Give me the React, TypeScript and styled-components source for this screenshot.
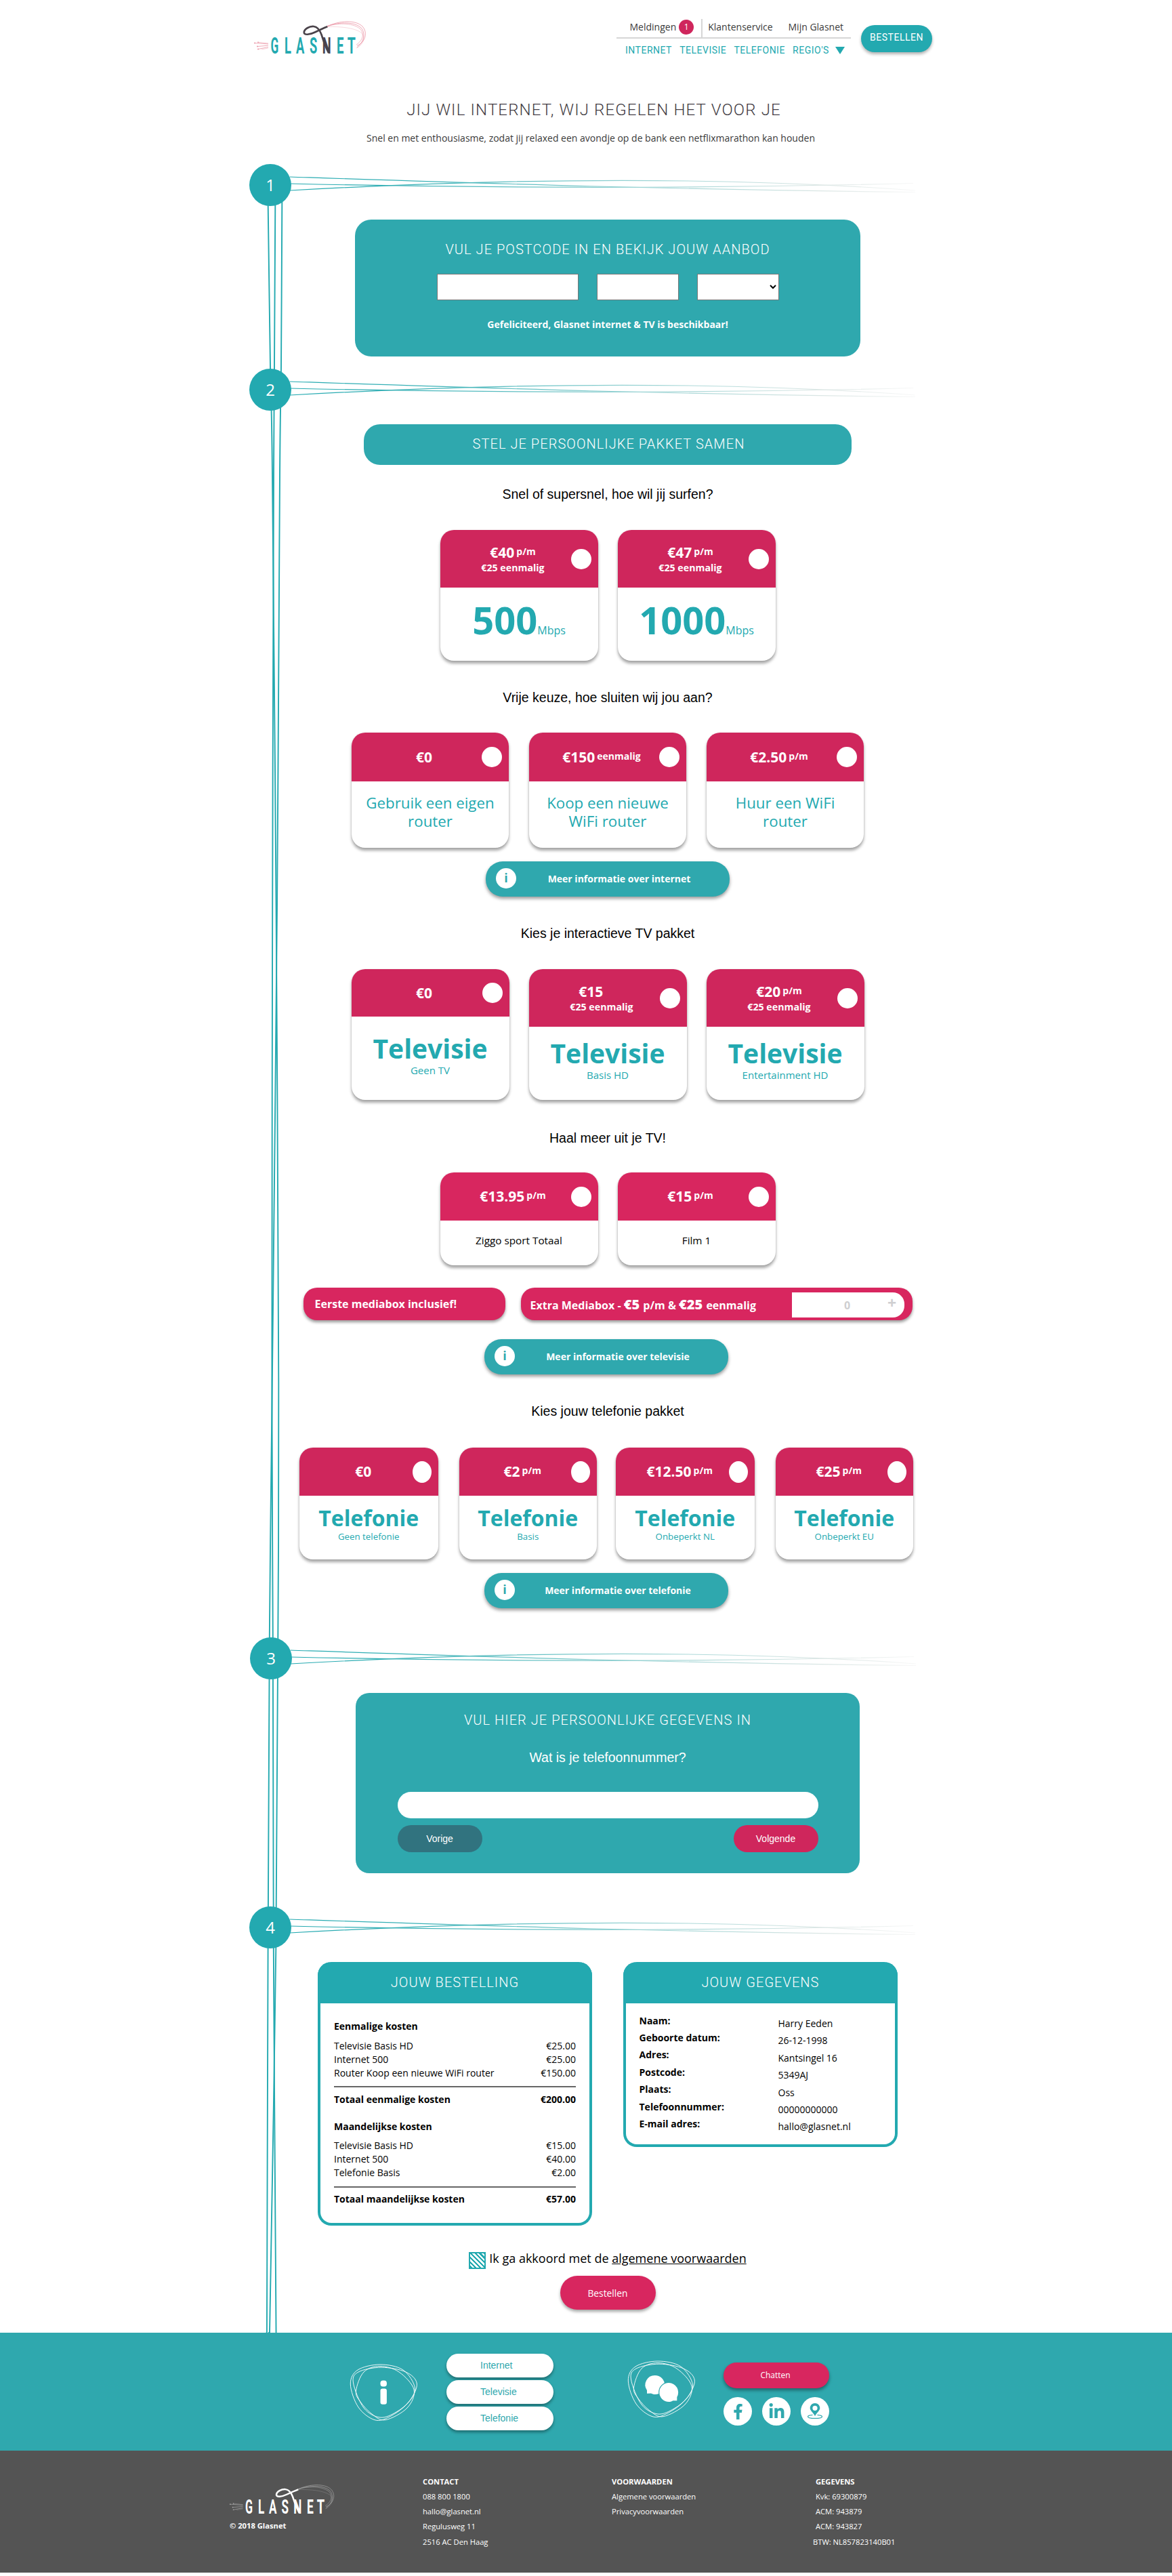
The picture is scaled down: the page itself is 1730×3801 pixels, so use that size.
import React from "react";
import styled, { createGlobalStyle } from "styled-components";
import { FaFacebookF, FaLinkedinIn } from "react-icons/fa";

const teal = "#23a9b0";
const panelTeal = "#2fa8ae";
const pink = "#cf265c";
const brightPink = "#d8265f";
const openSans = `"Open Sans", "Noto Sans", sans-serif`;
const roboto = `Roboto, "Liberation Sans", sans-serif`;
const arial = `"Liberation Sans", Arial, sans-serif`;

const GlobalStyle = createGlobalStyle`
  *, *::before, *::after { box-sizing: border-box; }
  html, body { margin: 0; padding: 0; background: #fff; }
  body { font-family: ${openSans}; font-size: 14px; color: #000; }
  button { border: 0; padding: 0; font: inherit; cursor: pointer; }
  a { color: inherit; text-decoration: none; }
  h1, h2, h3, p, dl, dd, ul { margin: 0; padding: 0; font-size: inherit; font-weight: 400; list-style: none; }
`;

const Page = styled.div`
  width: 1730px;
  min-height: 3801px;
  background: #fff;
`;

/* ---------- header ---------- */

const Header = styled.header`
  display: flex;
  align-items: flex-start;
  height: 90px;
  padding: 28px 354px 0 373px;
`;

const HeaderLogo = styled.div`
  margin: 2px auto 0 0;
  height: 52px;
`;

const Nav = styled.nav`
  width: 346px;
`;

const ServiceRow = styled.div`
  display: flex;
  height: 29px;
  padding-left: 19.5px;
  border-bottom: 2px solid #d6d6d6;
  line-height: 24px;
  color: #3a3a3a;
  white-space: nowrap;
`;

const Badge = styled.span`
  flex: none;
  width: 22px;
  height: 22px;
  margin: 1px 11px 0 4px;
  border-radius: 50%;
  background: ${pink};
  color: #fff;
  font-size: 12px;
  line-height: 22px;
  text-align: center;
`;

const ServiceDivider = styled.span`
  flex: none;
  width: 2px;
  height: 27px;
  margin-right: 8px;
  background: #d6d6d6;
`;

const ServiceLink = styled.a`
  flex: none;
  margin-right: 23px;

  &:last-child {
    margin-right: 0;
  }
`;

const MenuRow = styled.div`
  display: flex;
  align-items: center;
  gap: 11.2px;
  padding: 7px 0 0 13px;
  font-family: ${roboto};
  font-weight: 400;
  letter-spacing: 0.5px;
  line-height: 20px;
  color: ${teal};
  white-space: nowrap;
`;

const Caret = styled.span`
  margin-left: -2px;
  border-left: 7.5px solid transparent;
  border-right: 7.5px solid transparent;
  border-top: 11px solid ${teal};
`;

const OrderLink = styled.a`
  width: 105px;
  height: 40px;
  margin: 9px 0 0 15px;
  border-radius: 20px;
  background: ${teal};
  box-shadow: 0 3px 4px rgba(0, 0, 0, 0.3);
  color: #fff;
  font-family: ${roboto};
  font-weight: 400;
  letter-spacing: 0.5px;
  line-height: 37px;
  text-align: center;
`;

/* ---------- hero ---------- */

const Hero = styled.section`
  height: 152px;
  padding: 57px 0 0 14px;
  text-align: center;
`;

const HeroTitle = styled.h1`
  padding-left: 9px;
  font-family: ${roboto};
  font-size: 24px;
  font-weight: 350;
  letter-spacing: 1.15px;
  line-height: 30px;
  color: #443d44;
`;

const HeroText = styled.p`
  margin-top: 17px;
  line-height: 20px;
  color: #3a3a3a;
`;

/* ---------- timeline ---------- */

const Main = styled.main`
  position: relative;
  display: flex;
  flex-direction: column;
  align-items: center;
  width: 1058px;
  height: 3200px;
  margin-left: 368px;
`;

const ThreadLayer = styled.div`
  position: absolute;
  top: 0;
  left: 0;
  height: 3200px;
`;

const StepRow = styled.div<{ $top?: number; $shift?: number }>`
  position: relative;
  display: flex;
  align-self: flex-start;
  height: 62px;
  margin-top: ${(p) => p.$top ?? 0}px;
  margin-left: ${(p) => p.$shift ?? 0}px;
`;

const StepCircle = styled.span`
  width: 62px;
  height: 62px;
  margin-right: -2px;
  border-radius: 50%;
  background: ${teal};
  color: #fff;
  font-size: 24px;
  font-weight: 400;
  line-height: 61px;
  text-align: center;
`;

const Panel = styled.section<{ $width: number; $height: number; $pad: number; $radius: number }>`
  display: flex;
  flex-direction: column;
  align-items: center;
  width: ${(p) => p.$width}px;
  height: ${(p) => p.$height}px;
  margin-top: 20px;
  padding-top: ${(p) => p.$pad}px;
  border-radius: ${(p) => p.$radius}px;
  background: ${panelTeal};
  color: #fff;
`;

const PanelTitle = styled.h2`
  font-family: ${roboto};
  font-size: 20px;
  font-weight: 350;
  letter-spacing: 1.05px;
  line-height: 28px;
`;

const FieldRow = styled.div`
  display: flex;
  gap: 27px;
  margin-top: 22px;
`;

const Field = styled.input<{ $width: number }>`
  width: ${(p) => p.$width}px;
  height: 39px;
  border: 1px solid #767676;
  border-radius: 0;
  background: #fff;
`;

const FieldSelect = styled.select`
  width: 121px;
  height: 39px;
  border: 1px solid #767676;
  border-radius: 0;
  background: #fff;
`;

const Availability = styled.p`
  margin-top: 25.5px;
  font-weight: 700;
  line-height: 20px;
`;

const SectionPill = styled.h2`
  width: 720px;
  height: 60px;
  margin-top: 20px;
  padding-left: 3px;
  border-radius: 24px;
  background: ${panelTeal};
  color: #fff;
  font-family: ${roboto};
  font-size: 20px;
  font-weight: 350;
  letter-spacing: 1.05px;
  line-height: 58px;
  text-align: center;
`;

const Question = styled.h3<{ $top: number; $bottom: number }>`
  margin: ${(p) => p.$top}px 0 ${(p) => p.$bottom}px;
  font-family: ${arial};
  font-size: 19.5px;
  line-height: 24px;
`;

/* ---------- option cards ---------- */

const CardRow = styled.div<{ $gap: number }>`
  display: flex;
  gap: ${(p) => p.$gap}px;
`;

const PhoneRow = styled(CardRow)`
  margin-right: 4.5px;
`;

const Card = styled.article<{ $width: number; $height: number }>`
  width: ${(p) => p.$width}px;
  height: ${(p) => p.$height}px;
  border-radius: 20px;
  background: #fff;
  box-shadow: 0 4px 4px rgba(0, 0, 0, 0.35), 0 0 2px rgba(0, 0, 0, 0.12);
`;

const CardHead = styled.header<{ $height: number; $color: string }>`
  display: flex;
  align-items: center;
  height: ${(p) => p.$height}px;
  padding: 0 10px 0 22px;
  border-radius: 20px 20px 0 0;
  background: ${(p) => p.$color};
  color: #fff;
`;

const PriceBlock = styled.div`
  flex: 1;
  font-weight: 700;
  text-align: center;
  white-space: nowrap;
`;

const Price = styled.div`
  font-size: 21px;
  line-height: 27px;
`;

const Period = styled.small<{ $hidden?: boolean }>`
  margin-left: 3px;
  font-size: 14px;
  line-height: 0;
  vertical-align: 4px;
  visibility: ${(p) => (p.$hidden ? "hidden" : "visible")};
`;

const OneOff = styled.div`
  font-size: 14.2px;
  line-height: 18px;
`;

const Radio = styled.span<{ $w: number; $h: number }>`
  flex: none;
  width: ${(p) => p.$w}px;
  height: ${(p) => p.$h}px;
  border-radius: 50%;
  background: #fff;
`;

const SpeedBody = styled.div`
  display: flex;
  justify-content: center;
  align-items: baseline;
  padding-top: 9px;
  font-size: 16px;
  color: ${teal};
`;

const Speed = styled.strong`
  font-size: 56px;
  line-height: 76px;
`;

const RouterBody = styled.div`
  padding: 18px 20px 0;
  font-size: 22.3px;
  line-height: 27px;
  text-align: center;
  color: ${teal};
`;

const ExtraBody = styled.div`
  padding-top: 19px;
  font-size: 15.3px;
  line-height: 20px;
  text-align: center;
`;

const PackageBody = styled.div<{ $pad: number; $size: number; $line: number; $sub: number }>`
  padding-top: ${(p) => p.$pad}px;
  text-align: center;
  color: ${teal};
  font-size: ${(p) => p.$sub}px;
  line-height: 18px;

  strong {
    display: block;
    font-size: ${(p) => p.$size}px;
    line-height: ${(p) => p.$line}px;
  }
`;

const InfoButton = styled.button<{ $top: number; $shift?: number }>`
  display: flex;
  align-items: center;
  width: 360px;
  height: 52px;
  margin: ${(p) => p.$top}px ${(p) => p.$shift ?? 0}px 0 0;
  padding: 0 15px 2px;
  border-radius: 25px;
  background: ${panelTeal};
  box-shadow: 0 3px 5px rgba(0, 0, 0, 0.4);
  color: #fff;
  font-weight: 700;
`;

const InfoMark = styled.span`
  width: 30px;
  height: 30px;
  border-radius: 50%;
  background: #fff;
  color: ${panelTeal};
  font-size: 18px;
  line-height: 29px;
`;

const InfoLabel = styled.span`
  flex: 1;
  padding-left: 4px;
`;

/* ---------- media boxes ---------- */

const MediaRow = styled.div`
  display: flex;
  gap: 23px;
  margin-top: 33px;
`;

const MediaBar = styled.div<{ $width: number }>`
  display: flex;
  width: ${(p) => p.$width}px;
  height: 48px;
  border-radius: 20px;
  background: ${brightPink};
  box-shadow: 0 3px 4px rgba(0, 0, 0, 0.4);
  color: #fff;
  font-size: 16px;
  font-weight: 700;
  line-height: 48px;
  white-space: nowrap;
`;

const MediaText = styled.span<{ $left: number; $drop?: number }>`
  flex: 1;
  padding: ${(p) => p.$drop ?? 0}px 0 0 ${(p) => p.$left}px;

  b {
    margin-right: 1px;
    font-size: 20px;
    line-height: 1;
  }
`;

const Stepper = styled.div`
  display: grid;
  grid-template-columns: 34px 1fr 36px;
  width: 166px;
  height: 37px;
  margin: 7px 12px 0 0;
  border-radius: 0 17px 17px 0;
  background: #fff;
  color: #cfcfd1;
  line-height: 38px;
  text-align: center;
`;

const Amount = styled.span`
  grid-column: 2;
`;

const Plus = styled.span`
  font-size: 23px;
  line-height: 31px;
`;

/* ---------- personal details form ---------- */

const FormQuestion = styled.p`
  margin-top: 28.5px;
  font-family: ${arial};
  font-size: 19.5px;
  line-height: 24px;
`;

const RoundInput = styled.input`
  width: 621px;
  height: 39px;
  margin-top: 39px;
  border: 0;
  border-radius: 19.5px;
  background: #fff;
`;

const FormActions = styled.div`
  display: flex;
  justify-content: space-between;
  width: 621px;
  margin-top: 10px;
`;

const FormButton = styled.button<{ $color: string }>`
  width: 125px;
  height: 40px;
  border-radius: 20px;
  background: ${(p) => p.$color};
  color: #fff;
  font-family: ${arial};
  font-size: 14px;
`;

/* ---------- summary ---------- */

const SummaryRow = styled.div`
  display: flex;
  align-items: flex-start;
  gap: 46px;
  margin-top: 20px;
`;

const SummaryCard = styled.section<{ $height: number }>`
  width: 405px;
  height: ${(p) => p.$height}px;
  border: 4px solid ${teal};
  border-top: 0;
  border-radius: 20px;
  background: #fff;
`;

const SummaryTitle = styled.h2`
  height: 61px;
  margin: 0 -4px;
  border-radius: 20px 20px 0 0;
  background: ${teal};
  color: #fff;
  font-family: ${roboto};
  font-size: 20px;
  font-weight: 350;
  letter-spacing: 1.05px;
  line-height: 61px;
  text-align: center;
`;

const CostGroup = styled.div`
  padding: 0 20px;
  margin-top: 20px;
  line-height: 20px;

  &:first-of-type {
    margin-top: 24px;
  }
`;

const CostHeading = styled.h3`
  margin-bottom: 8.5px;
  font-weight: 700;
`;

const CostLine = styled.div<{ $total?: boolean }>`
  display: flex;
  justify-content: space-between;
  font-weight: ${(p) => (p.$total ? 700 : 400)};
`;

const CostRule = styled.div`
  height: 2px;
  margin: 9.5px 0 7.5px;
  background: #666;
`;

const Details = styled.dl`
  display: grid;
  grid-template-columns: 205px 1fr;
  padding: 12.5px 0 0 19.5px;
  line-height: 25.4px;
`;

const DetailLabel = styled.dt`
  font-weight: 700;
`;

const DetailValue = styled.dd`
  padding-top: 4.5px;
  margin-bottom: -4.5px;
`;

const Consent = styled.label`
  display: flex;
  gap: 5px;
  height: 25px;
  margin-top: 39px;
  font-size: 18px;
  line-height: 18px;

  a {
    text-decoration: underline;
  }
`;

const StripedBox = styled.span`
  width: 25px;
  height: 25px;
  border: 2px solid ${teal};
  background: repeating-linear-gradient(45deg, ${teal} 0 2.2px, #fff 2.2px 4.8px);
`;

const SubmitButton = styled.button`
  width: 141px;
  height: 50px;
  margin-top: 10px;
  border-radius: 25px;
  background: ${brightPink};
  box-shadow: 0 3px 4px rgba(0, 0, 0, 0.35);
  color: #fff;
  font-size: 13.8px;
`;

/* ---------- contact strip & footer ---------- */

const ContactStrip = styled.section`
  display: flex;
  align-items: flex-start;
  height: 174px;
  padding-left: 515px;
  background: ${panelTeal};
`;

const BlobBox = styled.div<{ $top: number; $left?: number }>`
  width: 102px;
  height: 87px;
  margin: ${(p) => p.$top}px 0 0 ${(p) => p.$left ?? 0}px;
`;

const LinkStack = styled.div`
  display: flex;
  flex-direction: column;
  gap: 4px;
  margin: 31px 0 0 42px;
`;

const StackLink = styled.a`
  width: 158px;
  height: 35px;
  padding-left: 50px;
  border-radius: 17.5px;
  background: #fff;
  box-shadow: 0 3px 4px rgba(0, 0, 0, 0.35);
  color: ${panelTeal};
  font-family: ${arial};
  line-height: 35px;
`;

const ChatColumn = styled.div`
  width: 156px;
  margin: 44px 0 0 41px;
`;

const ChatButton = styled.button`
  display: block;
  width: 156px;
  height: 38px;
  padding-right: 3px;
  border-radius: 19px;
  background: ${brightPink};
  box-shadow: 0 3px 5px rgba(0, 0, 0, 0.4);
  color: #fff;
  font-size: 12px;
  line-height: 38px;
`;

const SocialRow = styled.div`
  display: flex;
  justify-content: space-between;
  margin-top: 13px;
`;

const Social = styled.a`
  display: flex;
  align-items: center;
  justify-content: center;
  width: 42px;
  height: 42px;
  border-radius: 50%;
  background: #fff;
  color: ${panelTeal};
`;

const Footer = styled.footer`
  display: grid;
  grid-template-columns: 287px 279px 301px auto;
  height: 180px;
  padding: 34.5px 0 0 337px;
  background: #545454;
  color: #fff;
  font-size: 11.2px;
  line-height: 22.3px;
`;

const FooterBrand = styled.div`
  padding-top: 14.5px;
`;

const Copyright = styled.p`
  margin: 4.5px 0 0 2px;
  font-weight: 700;
`;

const FooterHeading = styled.h3`
  font-size: 11.2px;
  font-weight: 700;
`;

const FooterItem = styled.li<{ $outdent?: boolean }>`
  margin-left: ${(p) => (p.$outdent ? -4 : 0)}px;
`;

/* ---------- drawings ---------- */

type Pt = [number, number];

// Smooth curve through the points (Catmull-Rom converted to cubic Béziers).
function smooth(pts: Pt[], closed = false): string {
  const n = pts.length;
  const at = (i: number): Pt => (closed ? pts[(i + n) % n] : pts[Math.max(0, Math.min(n - 1, i))]);
  let d = `M${pts[0][0]} ${pts[0][1]}`;
  const end = closed ? n : n - 1;
  for (let i = 0; i < end; i++) {
    const [a, b, c, e] = [at(i - 1), at(i), at(i + 1), at(i + 2)];
    d += `C${b[0] + (c[0] - a[0]) / 6} ${b[1] + (c[1] - a[1]) / 6} ${c[0] - (e[0] - b[0]) / 6} ${c[1] - (e[1] - b[1]) / 6} ${c[0]} ${c[1]}`;
  }
  return closed ? d + "Z" : d;
}

const threads: Pt[][] = [
  [[395.3, 280], [395.7, 304], [399, 540], [402, 700], [407.6, 1340], [411.3, 2040], [410.3, 2416], [407.3, 2875], [398.4, 3420], [396.8, 3442]],
  [[416.8, 280], [416.3, 304], [415, 540], [413, 700], [409, 1340], [401.8, 2040], [397.8, 2416], [395.6, 2875], [394, 3420], [393.5, 3442]],
  [[406.6, 280], [406.3, 304], [405, 540], [404, 700], [402.2, 1340], [401.4, 2040], [402.8, 2416], [403.8, 2875], [407.4, 3420], [407.6, 3442]],
];

function Threads() {
  return (
    <svg width="62" height="3200" viewBox="368 242 62 3200" fill="none" stroke={teal} strokeWidth="1.9">
      {threads.map((t, i) => (
        <path key={i} d={smooth(t)} />
      ))}
    </svg>
  );
}

function StepThreads({ id }: { id: string }) {
  return (
    <svg width="930" height="62" viewBox="0 0 930 62" fill="none" stroke={`url(#${id})`} strokeWidth="1.2">
      <defs>
        <linearGradient id={id} gradientUnits="userSpaceOnUse" x1="0" y1="0" x2="924" y2="0">
          <stop offset="0" stopColor={teal} />
          <stop offset="0.25" stopColor="#3fb3b8" />
          <stop offset="0.6" stopColor="#a3d6d6" />
          <stop offset="0.85" stopColor="#dbe6e4" />
          <stop offset="1" stopColor="#f8f8f8" />
        </linearGradient>
      </defs>
      <path d="M0 19C270 28 560 38 923 41.5" />
      <path d="M0 29C300 36 620 36 920 28.5" />
      <path d="M0 39C300 22 620 17 923 39" />
    </svg>
  );
}

const letters: [string, number, number][] = [
  ["G", 32.5, 0.53],
  ["L", 52, 0.56],
  ["A", 70.2, 0.56],
  ["S", 89.5, 0.56],
  ["N", 109.2, 0.56],
  ["E", 129.2, 0.57],
  ["T", 145.8, 0.6],
];

function Logo({ word, dark, wire, width, height }: { word: string; dark: string; wire: string; width: number; height: number }) {
  return (
    <svg width={width} height={height} viewBox="0 0 172 52" preserveAspectRatio="none" display="block" overflow="visible">
      <g fill="none" stroke={wire} strokeWidth="0.75">
        <path d="M110 9C128 0 152 -1 162 9C171 19 165 33 154 37.5" />
        <path d="M110 8.5C130 2 150 2 160 11C168 20 163 33 154 40" />
        <path d="M110 9C124 4 146 3 158 12C166 20 162 30 153 36" opacity="0.8" />
        <path d="M110 9.5C130 9 150 11 160 18C168 26 162 37 153 41" opacity="0.45" />
        <path d="M3 33.5L23 35" />
        <path d="M8 32.3L23 34" opacity="0.7" />
        <path d="M7 38.5L23 37.2" />
        <path d="M8 42.5L23 39.5" />
        <path d="M13 43L23 41" opacity="0.5" />
      </g>
      <g fill={wire}>
        <circle cx="3" cy="33.5" r="0.9" />
        <circle cx="8" cy="32.3" r="0.9" />
        <circle cx="7" cy="38.5" r="0.9" />
        <circle cx="8" cy="42.5" r="0.9" />
      </g>
      {letters.map(([char, x, scale]) => (
        <text
          key={char}
          transform={`translate(${x} 48.6) scale(${scale} 1)`}
          textAnchor="middle"
          fontFamily="Roboto, 'Liberation Sans', sans-serif"
          fontSize="32.6"
          fontWeight="700"
          fill={char === "N" ? dark : word}
        >
          {char}
        </text>
      ))}
      <path
        d="M110.3 9.2C103 12 98 14.5 92 17.5C84 21.5 76 22 75.8 18C76 12.5 84 8.6 90 9C96.5 9.5 99.5 15.5 101.5 21C104 29 108 40 112 48"
        fill="none"
        stroke={dark}
        strokeWidth="2.7"
      />
    </svg>
  );
}

const blobCurves: Pt[][] = [
  [[2.3, 32], [13, 11], [46, 3], [80, 11], [97.5, 38], [86, 61], [60, 80], [38, 84.7], [14, 66]],
  [[6.5, 30], [14, 14], [48, 7.2], [84, 14], [100.3, 31], [90, 56], [70, 73], [46, 81], [22, 67]],
  [[10.5, 42], [22, 14], [46, 5.5], [74, 14], [96, 40], [86, 67], [54, 84.7], [34, 76], [17, 58]],
];

function Blob({ children }: { children: React.ReactNode }) {
  return (
    <svg width="102" height="87" viewBox="0 0 102 87">
      <g fill="none" stroke="#fff" strokeWidth="0.9">
        {blobCurves.map((c, i) => (
          <path key={i} d={smooth(c, true)} />
        ))}
      </g>
      {children}
    </svg>
  );
}

function PinIcon() {
  return (
    <svg width="26" height="26" viewBox="0 0 26 26">
      <path
        fill="currentColor"
        fillRule="evenodd"
        d="M13 1C8.9 1 5.7 4.2 5.7 8.2C5.7 12 10.2 14.5 13 20C15.8 14.5 20.3 12 20.3 8.2C20.3 4.2 17.1 1 13 1ZM13 4.7A3.6 3.6 0 1 1 13 11.9A3.6 3.6 0 1 1 13 4.7Z"
      />
      <path d="M9.5 18.3C5 18.6 2.5 19.5 2.5 20.7C2.5 22.3 7 23.4 13 23.4S23.5 22.3 23.5 20.7C23.5 19.5 21 18.6 16.5 18.3" fill="none" stroke="currentColor" strokeWidth="1.3" />
    </svg>
  );
}

/* ---------- card pieces ---------- */

type HeadProps = {
  price: string;
  period?: string;
  hidePeriod?: boolean;
  oneOff?: string;
  height?: number;
  color?: string;
  oval?: boolean;
};

function PriceHead({ price, period, hidePeriod, oneOff, height = 71, color = pink, oval }: HeadProps) {
  return (
    <CardHead $height={height} $color={color}>
      <PriceBlock>
        <Price>
          {price}
          {period && <Period $hidden={hidePeriod}>{period}</Period>}
        </Price>
        {oneOff && <OneOff>{oneOff}</OneOff>}
      </PriceBlock>
      <Radio $w={oval ? 28 : 30} $h={oval ? 32 : 30} />
    </CardHead>
  );
}

function Info({ label, top, shift }: { label: string; top: number; shift?: number }) {
  return (
    <InfoButton $top={top} $shift={shift}>
      <InfoMark>i</InfoMark>
      <InfoLabel>{label}</InfoLabel>
    </InfoButton>
  );
}

function PhoneCard({ width, price, period, name }: { width: number; price: string; period?: string; name: string }) {
  return (
    <Card $width={width} $height={165}>
      <PriceHead price={price} period={period} oval />
      <PackageBody $pad={14} $size={32} $line={37} $sub={13.3}>
        <strong>Telefonie</strong>
        {name}
      </PackageBody>
    </Card>
  );
}

function Costs({ title, lines, total }: { title: string; lines: [string, string][]; total: [string, string] }) {
  return (
    <CostGroup>
      <CostHeading>{title}</CostHeading>
      {lines.map(([label, value]) => (
        <CostLine key={label}>
          <span>{label}</span>
          <span>{value}</span>
        </CostLine>
      ))}
      <CostRule />
      <CostLine $total>
        <span>{total[0]}</span>
        <span>{total[1]}</span>
      </CostLine>
    </CostGroup>
  );
}

const details: [string, string][] = [
  ["Naam:", "Harry Eeden"],
  ["Geboorte datum:", "26-12-1998"],
  ["Adres:", "Kantsingel 16"],
  ["Postcode:", "5349AJ"],
  ["Plaats:", "Oss"],
  ["Telefoonnummer:", "00000000000"],
  ["E-mail adres:", "hallo@glasnet.nl"],
];

export default function App() {
  return (
    <Page>
      <GlobalStyle />
      <Header>
        <HeaderLogo>
          <Logo word={teal} dark="#4a434a" wire="#e98fa0" width={172} height={52} />
        </HeaderLogo>
        <Nav>
          <ServiceRow>
            <span>Meldingen</span>
            <Badge>1</Badge>
            <ServiceDivider />
            <ServiceLink href="#">Klantenservice</ServiceLink>
            <ServiceLink href="#">Mijn Glasnet</ServiceLink>
          </ServiceRow>
          <MenuRow>
            <a href="#">INTERNET</a>
            <a href="#">TELEVISIE</a>
            <a href="#">TELEFONIE</a>
            <a href="#">REGIO'S</a>
            <Caret />
          </MenuRow>
        </Nav>
        <OrderLink href="#">BESTELLEN</OrderLink>
      </Header>

      <Hero>
        <HeroTitle>JIJ WIL INTERNET, WIJ REGELEN HET VOOR JE</HeroTitle>
        <HeroText>Snel en met enthousiasme, zodat jij relaxed een avondje op de bank een netflixmarathon kan houden</HeroText>
      </Hero>

      <Main>
        <ThreadLayer>
          <Threads />
        </ThreadLayer>

        <StepRow>
          <StepCircle>1</StepCircle>
          <StepThreads id="fade1" />
        </StepRow>
        <Panel $width={746} $height={202} $pad={30} $radius={24}>
          <PanelTitle>VUL JE POSTCODE IN EN BEKIJK JOUW AANBOD</PanelTitle>
          <FieldRow>
            <Field $width={209} />
            <Field $width={121} />
            <FieldSelect />
          </FieldRow>
          <Availability>Gefeliciteerd, Glasnet internet &amp; TV is beschikbaar!</Availability>
        </Panel>

        <StepRow $top={18}>
          <StepCircle>2</StepCircle>
          <StepThreads id="fade2" />
        </StepRow>
        <SectionPill>STEL JE PERSOONLIJKE PAKKET SAMEN</SectionPill>

        <Question $top={31} $bottom={41}>Snel of supersnel, hoe wil jij surfen?</Question>
        <CardRow $gap={29}>
          <Card $width={233} $height={193}>
            <PriceHead price="€40" period="p/m" oneOff="€25 eenmalig" height={85} />
            <SpeedBody>
              <Speed>500</Speed>Mbps
            </SpeedBody>
          </Card>
          <Card $width={233} $height={193}>
            <PriceHead price="€47" period="p/m" oneOff="€25 eenmalig" height={85} />
            <SpeedBody>
              <Speed>1000</Speed>Mbps
            </SpeedBody>
          </Card>
        </CardRow>

        <Question $top={42} $bottom={40}>Vrije keuze, hoe sluiten wij jou aan?</Question>
        <CardRow $gap={30}>
          <Card $width={232} $height={170}>
            <PriceHead price="€0" height={72} />
            <RouterBody>Gebruik een eigen router</RouterBody>
          </Card>
          <Card $width={232} $height={170}>
            <PriceHead price="€150" period="eenmalig" height={72} />
            <RouterBody>Koop een nieuwe WiFi router</RouterBody>
          </Card>
          <Card $width={232} $height={170}>
            <PriceHead price="€2.50" period="p/m" height={72} />
            <RouterBody>Huur een WiFi router</RouterBody>
          </Card>
        </CardRow>
        <Info label="Meer informatie over internet" top={20} />

        <Question $top={41.5} $bottom={41.5}>Kies je interactieve TV pakket</Question>
        <CardRow $gap={29}>
          <Card $width={233} $height={193}>
            <PriceHead price="€0" height={70} />
            <PackageBody $pad={24} $size={39} $line={46} $sub={15}>
              <strong>Televisie</strong>Geen TV
            </PackageBody>
          </Card>
          <Card $width={233} $height={193}>
            <PriceHead price="€15" period="p/m" hidePeriod oneOff="€25 eenmalig" height={85} />
            <PackageBody $pad={16} $size={39} $line={46} $sub={15}>
              <strong>Televisie</strong>Basis HD
            </PackageBody>
          </Card>
          <Card $width={233} $height={193}>
            <PriceHead price="€20" period="p/m" oneOff="€25 eenmalig" height={85} />
            <PackageBody $pad={16} $size={39} $line={46} $sub={15}>
              <strong>Televisie</strong>Entertainment HD
            </PackageBody>
          </Card>
        </CardRow>

        <Question $top={44} $bottom={39}>Haal meer uit je TV!</Question>
        <CardRow $gap={29}>
          <Card $width={233} $height={137}>
            <PriceHead price="€13.95" period="p/m" color={brightPink} />
            <ExtraBody>Ziggo sport Totaal</ExtraBody>
          </Card>
          <Card $width={233} $height={137}>
            <PriceHead price="€15" period="p/m" color={brightPink} />
            <ExtraBody>Film 1</ExtraBody>
          </Card>
        </CardRow>

        <MediaRow>
          <MediaBar $width={298}>
            <MediaText $left={17}>Eerste mediabox inclusief!</MediaText>
          </MediaBar>
          <MediaBar $width={578}>
            <MediaText $left={14} $drop={2}>
              Extra Mediabox - <b>€5</b> p/m &amp; <b>€25</b> eenmalig
            </MediaText>
            <Stepper>
              <Amount>0</Amount>
              <Plus>+</Plus>
            </Stepper>
          </MediaBar>
        </MediaRow>
        <Info label="Meer informatie over televisie" top={28} shift={4} />

        <Question $top={42} $bottom={42}>Kies jouw telefonie pakket</Question>
        <PhoneRow $gap={28}>
          <CardRow $gap={31}>
            <PhoneCard width={205} price="€0" name="Geen telefonie" />
            <PhoneCard width={203} price="€2" period="p/m" name="Basis" />
          </CardRow>
          <CardRow $gap={31}>
            <PhoneCard width={205} price="€12.50" period="p/m" name="Onbeperkt NL" />
            <PhoneCard width={203} price="€25" period="p/m" name="Onbeperkt EU" />
          </CardRow>
        </PhoneRow>
        <Info label="Meer informatie over telefonie" top={20} shift={4} />

        <StepRow $top={43} $shift={1}>
          <StepCircle>3</StepCircle>
          <StepThreads id="fade3" />
        </StepRow>
        <Panel $width={744} $height={266} $pad={26} $radius={20}>
          <PanelTitle>VUL HIER JE PERSOONLIJKE GEGEVENS IN</PanelTitle>
          <FormQuestion>Wat is je telefoonnummer?</FormQuestion>
          <RoundInput />
          <FormActions>
            <FormButton $color="#31737f">Vorige</FormButton>
            <FormButton $color={pink}>Volgende</FormButton>
          </FormActions>
        </Panel>

        <StepRow $top={49}>
          <StepCircle>4</StepCircle>
          <StepThreads id="fade4" />
        </StepRow>
        <SummaryRow>
          <SummaryCard $height={389}>
            <SummaryTitle>JOUW BESTELLING</SummaryTitle>
            <Costs
              title="Eenmalige kosten"
              lines={[
                ["Televisie Basis HD", "€25.00"],
                ["Internet 500", "€25.00"],
                ["Router Koop een nieuwe WiFi router", "€150.00"],
              ]}
              total={["Totaal eenmalige kosten", "€200.00"]}
            />
            <Costs
              title="Maandelijkse kosten"
              lines={[
                ["Televisie Basis HD", "€15.00"],
                ["Internet 500", "€40.00"],
                ["Telefonie Basis", "€2.00"],
              ]}
              total={["Totaal maandelijkse kosten", "€57.00"]}
            />
          </SummaryCard>
          <SummaryCard $height={273}>
            <SummaryTitle>JOUW GEGEVENS</SummaryTitle>
            <Details>
              {details.map(([label, value]) => (
                <React.Fragment key={label}>
                  <DetailLabel>{label}</DetailLabel>
                  <DetailValue>{value}</DetailValue>
                </React.Fragment>
              ))}
            </Details>
          </SummaryCard>
        </SummaryRow>

        <Consent>
          <StripedBox />
          <span>
            Ik ga akkoord met de <a href="#">algemene voorwaarden</a>
          </span>
        </Consent>
        <SubmitButton>Bestellen</SubmitButton>
      </Main>

      <ContactStrip>
        <BlobBox $top={44}>
          <Blob>
            <rect x="46.5" y="26.4" width="9.4" height="9.2" rx="3.8" fill="#fff" />
            <rect x="46.5" y="38.4" width="9.4" height="23.4" rx="3.2" fill="#fff" />
          </Blob>
        </BlobBox>
        <LinkStack>
          <StackLink href="#">Internet</StackLink>
          <StackLink href="#">Televisie</StackLink>
          <StackLink href="#">Telefonie</StackLink>
        </LinkStack>
        <BlobBox $top={39} $left={108}>
          <Blob>
            <path d="M42 24A14 14 0 1 1 42 52C39.5 52 37.5 51.3 36 50.5L30 50.7V46A14 14 0 0 1 42 24Z" fill="#fff" />
            <path
              d="M62.3 35A14 14 0 1 0 62.3 63C64.8 63 66.8 62.3 68.3 61.2L74.3 61.2V56A14 14 0 0 0 62.3 35Z"
              fill="#fff"
              stroke={panelTeal}
              strokeWidth="2.4"
              paintOrder="stroke"
            />
          </Blob>
        </BlobBox>
        <ChatColumn>
          <ChatButton>Chatten</ChatButton>
          <SocialRow>
            <Social href="#">
              <FaFacebookF size={23} />
            </Social>
            <Social href="#">
              <FaLinkedinIn size={25} />
            </Social>
            <Social href="#">
              <PinIcon />
            </Social>
          </SocialRow>
        </ChatColumn>
      </ContactStrip>

      <Footer>
        <FooterBrand>
          <Logo word="#fff" dark="#fff" wire="#a8a8a8" width={161} height={46.8} />
          <Copyright>© 2018 Glasnet</Copyright>
        </FooterBrand>
        <div>
          <FooterHeading>CONTACT</FooterHeading>
          <ul>
            <FooterItem>088 800 1800</FooterItem>
            <FooterItem>hallo@glasnet.nl</FooterItem>
            <FooterItem>Regulusweg 11</FooterItem>
            <FooterItem>2516 AC Den Haag</FooterItem>
          </ul>
        </div>
        <div>
          <FooterHeading>VOORWAARDEN</FooterHeading>
          <ul>
            <FooterItem>Algemene voorwaarden</FooterItem>
            <FooterItem>Privacyvoorwaarden</FooterItem>
          </ul>
        </div>
        <div>
          <FooterHeading>GEGEVENS</FooterHeading>
          <ul>
            <FooterItem>Kvk: 69300879</FooterItem>
            <FooterItem>ACM: 943879</FooterItem>
            <FooterItem>ACM: 943827</FooterItem>
            <FooterItem $outdent>BTW: NL857823140B01</FooterItem>
          </ul>
        </div>
      </Footer>
    </Page>
  );
}
